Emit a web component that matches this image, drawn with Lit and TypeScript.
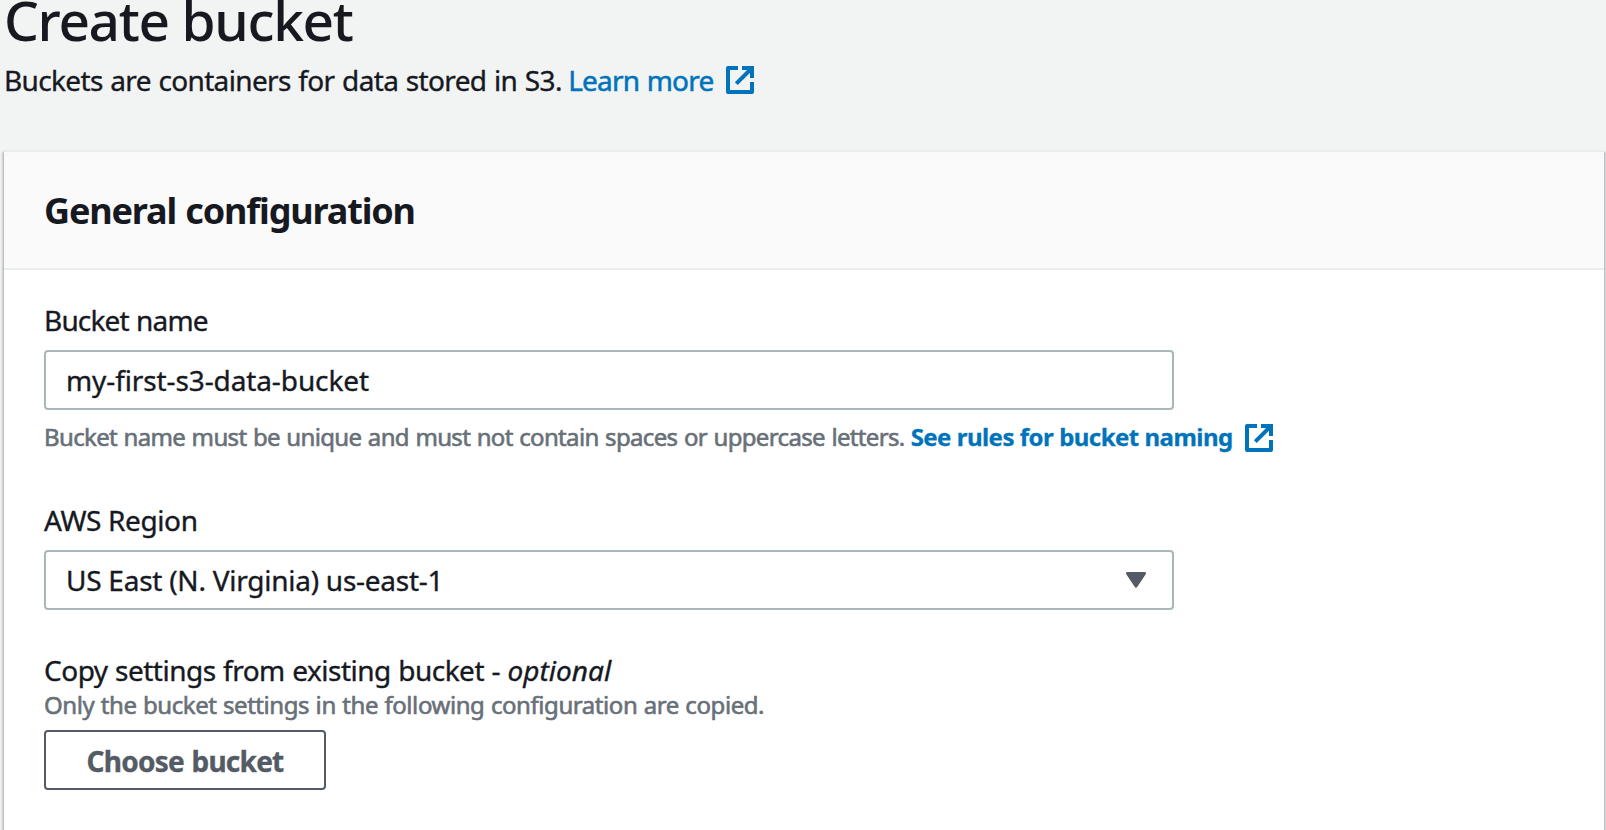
import { LitElement, html, css, svg } from "lit";
import { customElement, state } from "lit/decorators.js";

@customElement("external-icon")
export class ExternalIcon extends LitElement {
  static styles = css`
    :host { display: block; width: 28px; height: 28px; }
    svg { display: block; fill: none; stroke: currentColor; stroke-width: 4; }
  `;
  render() {
    return html`<svg viewBox="0 0 28 28" width="28" height="28" aria-hidden="true">
      ${svg`<path d="M12 2H2v24h24V16" stroke-linejoin="round"/><path d="M16 2h10v10"/><path d="M10.3 17.7 26 2"/>`}
    </svg>`;
  }
}

@customElement("app-root")
export class AppRoot extends LitElement {
  static styles = css`
    :host {
      display: block;
      height: 830px;
      overflow: hidden;
      background: #f2f3f3;
      color: #16191f;
      font-family: "Noto Sans", sans-serif;
      font-size: 28px;
      line-height: 40px;
      -webkit-text-stroke: 0.35px currentColor;
    }
    * { box-sizing: border-box; }
    h1, h2, p { margin: 0; white-space: nowrap; }
    a { color: #0073bb; text-decoration: none; display: flex; align-items: center; }
    h1 {
      padding-left: 4px;
      font-size: 55px;
      font-weight: 500;
      line-height: 40px;
      letter-spacing: -1.35px;
      -webkit-text-stroke-width: 0;
    }
    .intro {
      display: flex;
      align-items: center;
      gap: 6.5px;
      padding: 20px 0 0 4px;
      height: 60px;
      white-space: nowrap;
      letter-spacing: -0.64px;
      word-spacing: 0.9px;
    }
    .learn { gap: 12.5px; letter-spacing: -0.8px; word-spacing: 0.9px; -webkit-text-stroke-width: 0.5px; }
    .card {
      margin: 50px 2px 0 4px;
      height: 720px;
      border-top: 2px solid #eaeded;
      background: #fff;
      box-shadow: 0 2px 2px 0 rgba(0, 28, 36, 0.3), 2px 2px 2px 0 rgba(0, 28, 36, 0.15),
        -2px 2px 2px 0 rgba(0, 28, 36, 0.15);
    }
    .head {
      height: 118px;
      padding: 39px 40px 0;
      background: #fafafa;
      border-bottom: 2px solid #eaeded;
    }
    h2 {
      font-size: 36px;
      font-weight: 700;
      line-height: 40px;
      letter-spacing: -1.15px;
      word-spacing: 1px;
      -webkit-text-stroke-width: 0;
    }
    .body { padding: 30px 40px 0; }
    .label { display: block; margin-bottom: 10px; white-space: nowrap; }
    .name-label { letter-spacing: -0.82px; word-spacing: 0.7px; }
    .region-label { letter-spacing: -0.38px; }
    .control {
      display: flex;
      align-items: center;
      justify-content: space-between;
      width: 1130px;
      height: 60px;
      margin: 0;
      padding: 0 26px 0 20px;
      border: 2px solid #aab7b8;
      border-radius: 4px;
      background: #fff;
      color: #16191f;
      font: inherit;
      outline: none;
      -webkit-text-stroke: inherit;
    }
    .name { letter-spacing: -0.11px; }
    .region { letter-spacing: -0.25px; }
    .caret { display: block; fill: #545b64; }
    .help {
      display: flex;
      align-items: center;
      gap: 6px;
      height: 32px;
      font-size: 24px;
      line-height: 32px;
      color: #687078;
      white-space: nowrap;
      letter-spacing: -0.65px;
      word-spacing: 0.85px;
      -webkit-text-stroke-width: 0.6px;
    }
    .name-help { margin: 11px 0 47px; }
    .rules {
      height: 34px;
      gap: 12.5px;
      font-weight: 700;
      letter-spacing: -0.56px;
      word-spacing: 0.3px;
      -webkit-text-stroke-width: 0.3px;
    }
    .rules external-icon { margin-top: 2px; }
    .copy { margin-top: 40px; letter-spacing: -0.5px; word-spacing: 0.65px; }
    em { letter-spacing: 0.03px; }
    .copy-help { margin-top: -1px; letter-spacing: -0.43px; word-spacing: 0.65px; }
    button {
      display: block;
      width: 282px;
      height: 60px;
      margin: 9px 0 0;
      padding: 2px 0 0;
      border: 2px solid #545b64;
      border-radius: 4px;
      background: #fff;
      color: #545b64;
      font: inherit;
      font-weight: 700;
      letter-spacing: -0.75px;
      word-spacing: 1px;
      white-space: nowrap;
    }
  `;

  @state() private bucketName = "my-first-s3-data-bucket";

  private onName(e: Event) {
    this.bucketName = (e.target as HTMLInputElement).value;
  }

  render() {
    return html`
      <h1>Create bucket</h1>
      <div class="intro">
        <span>Buckets are containers for data stored in S3.</span>
        <a class="learn"><span>Learn more</span><external-icon></external-icon></a>
      </div>
      <section class="card">
        <header class="head"><h2>General configuration</h2></header>
        <div class="body">
          <label class="label name-label" for="name">Bucket name</label>
          <input id="name" class="control name" .value=${this.bucketName} @input=${this.onName} spellcheck="false" />
          <div class="help name-help">
            <span>Bucket name must be unique and must not contain spaces or uppercase letters.</span>
            <a class="rules"><span>See rules for bucket naming</span><external-icon></external-icon></a>
          </div>
          <span class="label region-label">AWS Region</span>
          <div class="control region">
            <span>US East (N. Virginia) us-east-1</span>
            <svg class="caret" viewBox="0 0 20 16" width="20" height="16" aria-hidden="true">
              <path d="M1.500 0H18.500C19.800 0 20.400 1.300 19.700 2.300L11.200 15.100C10.600 16 9.400 16 8.800 15.100L0.300 2.300C-0.400 1.300 0.200 0 1.500 0Z" />
            </svg>
          </div>
          <p class="copy">Copy settings from existing bucket - <em>optional</em></p>
          <p class="help copy-help">Only the bucket settings in the following configuration are copied.</p>
          <button type="button">Choose bucket</button>
        </div>
      </section>
    `;
  }
}
